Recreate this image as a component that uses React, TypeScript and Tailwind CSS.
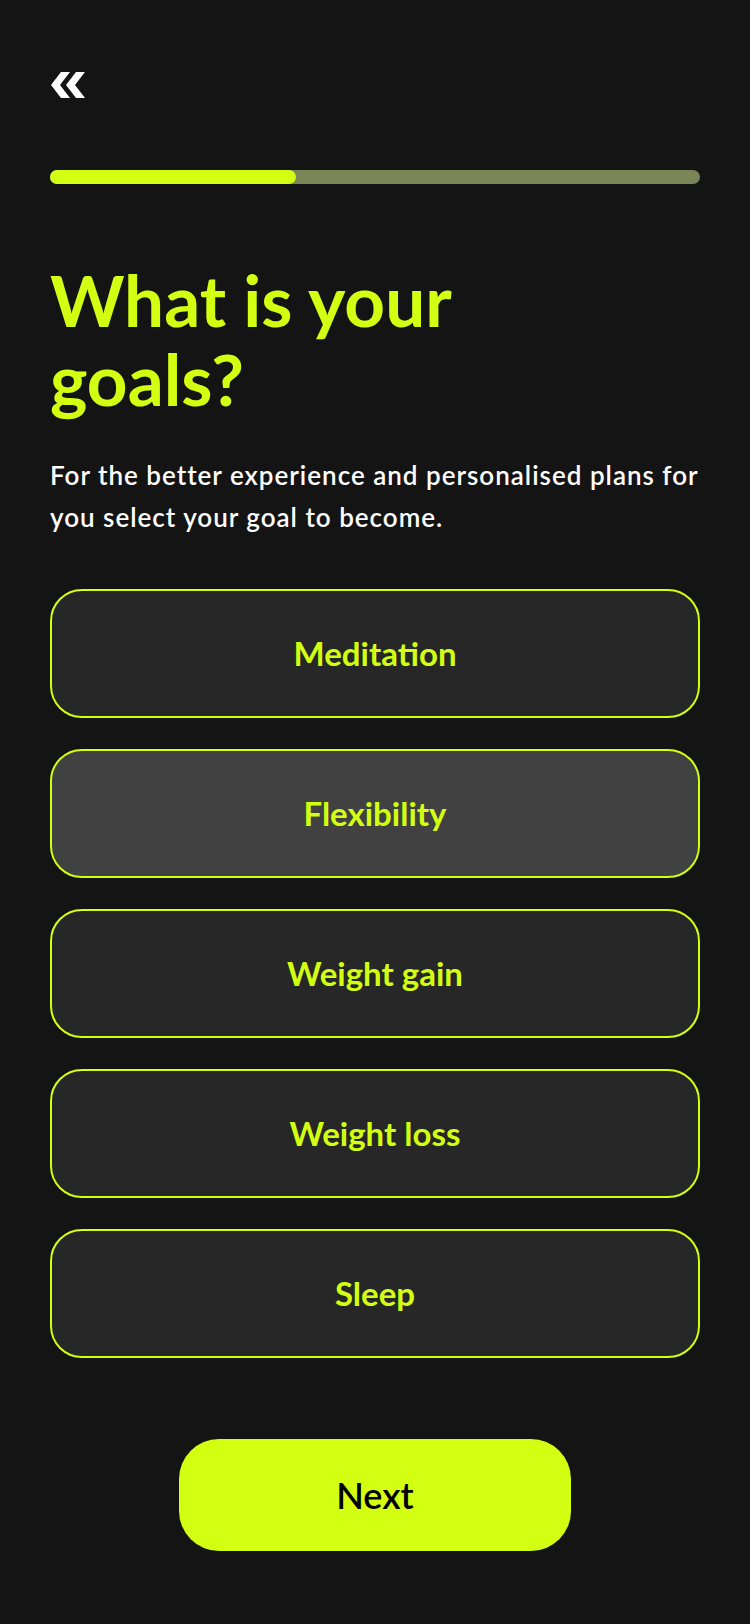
import React from "react";

const options = [
  { label: "Meditation", selected: false },
  { label: "Flexibility", selected: true },
  { label: "Weight gain", selected: false },
  { label: "Weight loss", selected: false },
  { label: "Sleep", selected: false },
];

export default function App() {
  return (
    <div
      className="min-h-[1624px] w-[750px] bg-[#141414] px-[50px] pt-[72px]"
      style={{ fontFamily: "Lato, 'Noto Sans', sans-serif" }}
    >
      <button className="block h-[26px] w-[35px]" aria-label="Back">
        <svg width="35" height="26" viewBox="0 0 35 26" fill="#ffffff">
          <polygon points="11,0 20,0 10,13 20,26 11,26 1,13" />
          <polygon points="26,0 35,0 25,13 35,26 26,26 16,13" />
        </svg>
      </button>

      <div className="mt-[72px] h-[14px] w-full rounded-full bg-[#7b8456]">
        <div className="h-full w-[246px] rounded-full bg-[#d2ff12]" />
      </div>

      <h1 className="mt-[76px] text-[71px] font-bold leading-[79px] text-[#d2ff12]">
        What is your
        <br />
        goals?
      </h1>

      <p className="mt-[36px] text-[26px] font-semibold leading-[42px] tracking-[1px] text-white">
        For the better experience and personalised plans for you select your goal to become.
      </p>

      <div className="mt-[51px] flex flex-col gap-[31px]">
        {options.map((o) => (
          <button
            key={o.label}
            className={`flex h-[129px] w-full items-center justify-center rounded-[32px] border-2 border-[#d2ff12] text-[33px] font-bold text-[#d2ff12] ${
              o.selected ? "bg-[#414141]" : "bg-[#272727]"
            }`}
          >
            {o.label}
          </button>
        ))}
      </div>

      <div className="mt-[81px] flex justify-center">
        <button className="flex h-[112px] w-[392px] items-center justify-center rounded-[40px] bg-[#d2ff12] text-[36px] font-semibold text-black">
          Next
        </button>
      </div>
    </div>
  );
}
